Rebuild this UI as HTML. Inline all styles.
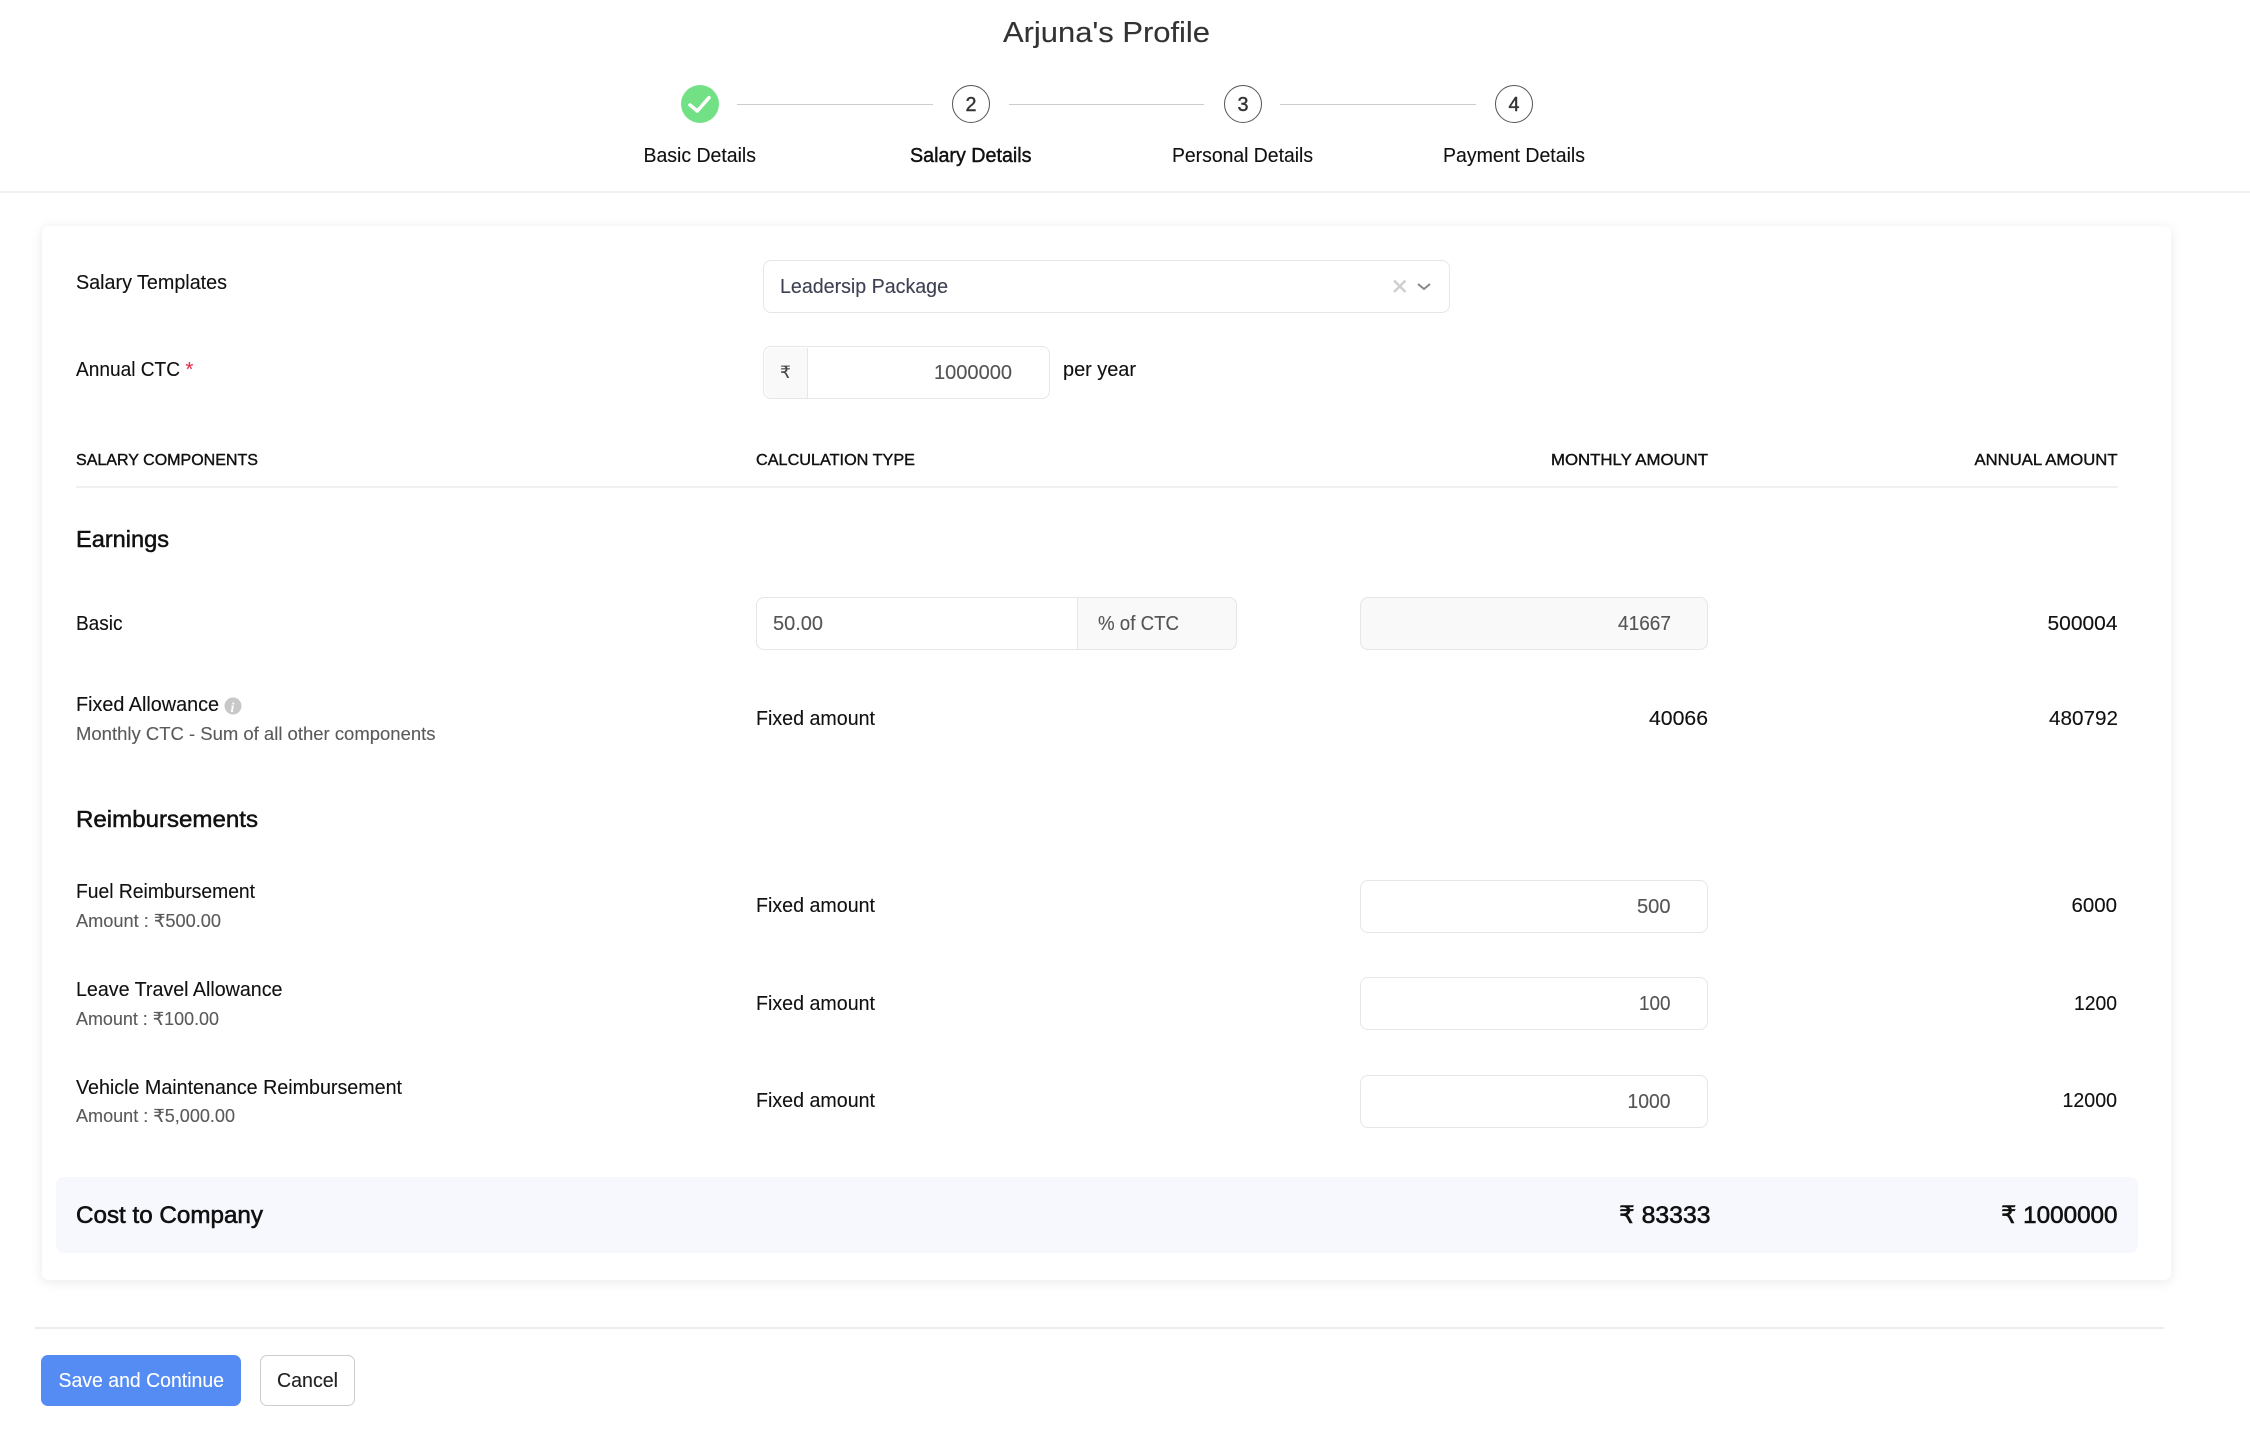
<!DOCTYPE html>
<html lang="en">
<head>
<meta charset="utf-8">
<title>Arjuna's Profile</title>
<style>
html,body{margin:0;padding:0;background:#fff;width:2250px;height:1448px;overflow:hidden;font-family:"Liberation Sans",sans-serif}
.b{position:absolute;box-sizing:border-box}
.field{border:1.5px solid #e6e6e6;border-radius:8px;background:#fff}
.grey{background:#f9f9f9}
svg.t{position:absolute;left:0;top:0}
svg text{font-family:"Liberation Sans","DejaVu Sans",sans-serif;font-size:20px;fill:#111;stroke:#111;stroke-width:.12px}
.m{stroke-width:.45px}
.s{font-size:18px;fill:#5a5a5a;stroke:#5a5a5a}
.v{fill:#555;stroke:#555}
.h{font-size:16px;stroke-width:.4px}
.e{font-size:23px;stroke-width:.5px}
.c{font-size:24px;stroke-width:.6px}
.d{font-size:20px;fill:#333;stroke:#333;stroke-width:.4px}
</style>
</head>
<body>
<div class="b" style="left:0;top:191px;width:2250px;height:1.5px;background:#f0f0f0"></div>
<div class="b" style="left:737px;top:103.500px;width:196px;height:1.5px;background:#ccc"></div>
<div class="b" style="left:1009px;top:103.500px;width:195px;height:1.5px;background:#ccc"></div>
<div class="b" style="left:1280px;top:103.500px;width:196px;height:1.5px;background:#ccc"></div>
<div class="b" style="left:681px;top:85px;width:38px;height:38px;border-radius:50%;background:#72e085"></div>
<div class="b" style="left:952px;top:85px;width:38px;height:38px;border-radius:50%;border:1.5px solid #555"></div>
<div class="b" style="left:1224px;top:85px;width:38px;height:38px;border-radius:50%;border:1.5px solid #555"></div>
<div class="b" style="left:1495px;top:85px;width:38px;height:38px;border-radius:50%;border:1.5px solid #555"></div>

<div class="b" style="left:42px;top:226px;width:2129px;height:1054px;background:#fff;border-radius:7px;box-shadow:0 2px 12px rgba(0,0,0,.09)"></div>
<div class="b field" style="left:763px;top:260px;width:687px;height:53px"></div>
<div class="b field" style="left:763px;top:346px;width:287px;height:53px"></div>
<div class="b grey" style="left:764.500px;top:347.500px;width:43px;height:50px;border-right:1.5px solid #e6e6e6;border-radius:7px 0 0 7px"></div>
<div class="b" style="left:76px;top:486px;width:2042px;height:1.5px;background:#f0f0f0"></div>

<div class="b field" style="left:756px;top:597px;width:481px;height:53px"></div>
<div class="b grey" style="left:1077px;top:597px;width:160px;height:53px;border:1.5px solid #e6e6e6;border-radius:0 8px 8px 0"></div>
<div class="b field grey" style="left:1360px;top:597px;width:348px;height:53px"></div>
<div class="b field" style="left:1360px;top:880px;width:348px;height:53px"></div>
<div class="b field" style="left:1360px;top:977px;width:348px;height:53px"></div>
<div class="b field" style="left:1360px;top:1075px;width:348px;height:53px"></div>

<div class="b" style="left:56px;top:1177px;width:2082px;height:76px;background:#f6f8fd;border-radius:8px"></div>
<div class="b" style="left:35px;top:1327px;width:2129px;height:1.5px;background:#ececec"></div>
<div class="b" style="left:41px;top:1355px;width:200px;height:51px;background:#558cf4;border-radius:7px"></div>
<div class="b" style="left:260px;top:1355px;width:95px;height:51px;background:#fff;border:1.5px solid #ccc;border-radius:7px"></div>

<svg class="t" width="2250" height="1448" viewBox="0 0 2250 1448" xmlns="http://www.w3.org/2000/svg">
<polyline points="690,105 697.3,111 709,97.7" fill="none" stroke="#fff" stroke-width="3.5" stroke-linecap="round" stroke-linejoin="round"/>
<path d="M1394 280.500L1405.500 292M1405.500 280.500L1394 292" stroke="#cfcfcf" stroke-width="2.4" fill="none"/>
<path d="M1418 284L1424 289L1430 284" stroke="#888" stroke-width="2" fill="none"/>
<circle cx="233" cy="706" r="8.5" fill="#c8c8c8"/>

<text x="1003" y="42" textLength="207" lengthAdjust="spacingAndGlyphs" style="font-size:29px;fill:#333;stroke:#333">Arjuna's Profile</text>
<text x="965.500" y="111" textLength="11" lengthAdjust="spacingAndGlyphs" class="d">2</text>
<text x="1237.500" y="111" textLength="11" lengthAdjust="spacingAndGlyphs" class="d">3</text>
<text x="1508.500" y="111" textLength="11" lengthAdjust="spacingAndGlyphs" class="d">4</text>
<text x="643.500" y="162" textLength="112.500" lengthAdjust="spacingAndGlyphs">Basic Details</text>
<text x="910" y="162" textLength="121.500" lengthAdjust="spacingAndGlyphs" class="m">Salary Details</text>
<text x="1172" y="162" textLength="141" lengthAdjust="spacingAndGlyphs">Personal Details</text>
<text x="1443" y="162" textLength="142" lengthAdjust="spacingAndGlyphs">Payment Details</text>

<text x="76" y="289" textLength="151" lengthAdjust="spacingAndGlyphs">Salary Templates</text>
<text x="780" y="293" textLength="168" lengthAdjust="spacingAndGlyphs" style="fill:#3d4152;stroke:#3d4152">Leadersip Package</text>
<text x="76" y="376" textLength="104" lengthAdjust="spacingAndGlyphs">Annual CTC</text>
<text x="185.500" y="376" style="fill:#e8334a;stroke:#e8334a">*</text>
<text x="780" y="378" style="font-size:17px;fill:#444;stroke:#444">₹</text>
<text x="934" y="379" textLength="78" lengthAdjust="spacingAndGlyphs" class="v">1000000</text>
<text x="1063" y="376" textLength="73" lengthAdjust="spacingAndGlyphs">per year</text>

<text x="76" y="465" textLength="182" lengthAdjust="spacingAndGlyphs" class="h">SALARY COMPONENTS</text>
<text x="756" y="465" textLength="159" lengthAdjust="spacingAndGlyphs" class="h">CALCULATION TYPE</text>
<text x="1551" y="465" textLength="157" lengthAdjust="spacingAndGlyphs" class="h">MONTHLY AMOUNT</text>
<text x="1974.500" y="465" textLength="143" lengthAdjust="spacingAndGlyphs" class="h">ANNUAL AMOUNT</text>

<text x="76" y="547" textLength="93" lengthAdjust="spacingAndGlyphs" class="e">Earnings</text>
<text x="76" y="630" textLength="46.500" lengthAdjust="spacingAndGlyphs">Basic</text>
<text x="773" y="630" textLength="50" lengthAdjust="spacingAndGlyphs" class="v">50.00</text>
<text x="1098" y="630" textLength="81" lengthAdjust="spacingAndGlyphs" class="v">% of CTC</text>
<text x="1618" y="630" textLength="53" lengthAdjust="spacingAndGlyphs" class="v">41667</text>
<text x="2047.500" y="630" textLength="70" lengthAdjust="spacingAndGlyphs">500004</text>

<text x="76" y="711" textLength="143" lengthAdjust="spacingAndGlyphs">Fixed Allowance</text>
<text x="230.500" y="712" style="font-size:14px;fill:#fff;stroke:none;font-style:italic;font-weight:bold;font-family:'Liberation Serif',serif">i</text>
<text x="76" y="740" textLength="359.500" lengthAdjust="spacingAndGlyphs" class="s">Monthly CTC - Sum of all other components</text>
<text x="756" y="725" textLength="119" lengthAdjust="spacingAndGlyphs">Fixed amount</text>
<text x="1649" y="725" textLength="59" lengthAdjust="spacingAndGlyphs">40066</text>
<text x="2049" y="725" textLength="69" lengthAdjust="spacingAndGlyphs">480792</text>

<text x="76" y="827" textLength="182" lengthAdjust="spacingAndGlyphs" class="e">Reimbursements</text>

<text x="76" y="898" textLength="179" lengthAdjust="spacingAndGlyphs">Fuel Reimbursement</text>
<text x="76" y="927" textLength="145" lengthAdjust="spacingAndGlyphs" class="s">Amount : ₹500.00</text>
<text x="756" y="912" textLength="119" lengthAdjust="spacingAndGlyphs">Fixed amount</text>
<text x="1637" y="913" textLength="33.500" lengthAdjust="spacingAndGlyphs" class="v">500</text>
<text x="2071.500" y="912" textLength="45.500" lengthAdjust="spacingAndGlyphs">6000</text>

<text x="76" y="996" textLength="206.500" lengthAdjust="spacingAndGlyphs">Leave Travel Allowance</text>
<text x="76" y="1025" textLength="143" lengthAdjust="spacingAndGlyphs" class="s">Amount : ₹100.00</text>
<text x="756" y="1010" textLength="119" lengthAdjust="spacingAndGlyphs">Fixed amount</text>
<text x="1639" y="1010" textLength="31.500" lengthAdjust="spacingAndGlyphs" class="v">100</text>
<text x="2074" y="1010" textLength="43" lengthAdjust="spacingAndGlyphs">1200</text>

<text x="76" y="1094" textLength="326" lengthAdjust="spacingAndGlyphs">Vehicle Maintenance Reimbursement</text>
<text x="76" y="1122" textLength="159" lengthAdjust="spacingAndGlyphs" class="s">Amount : ₹5,000.00</text>
<text x="756" y="1107" textLength="119" lengthAdjust="spacingAndGlyphs">Fixed amount</text>
<text x="1627.500" y="1108" textLength="43" lengthAdjust="spacingAndGlyphs" class="v">1000</text>
<text x="2062.500" y="1107" textLength="54.500" lengthAdjust="spacingAndGlyphs">12000</text>

<text x="76" y="1223" textLength="187" lengthAdjust="spacingAndGlyphs" class="c">Cost to Company</text>
<text x="1619" y="1223" textLength="91.500" lengthAdjust="spacingAndGlyphs" class="c">₹ 83333</text>
<text x="2001" y="1223" textLength="116.500" lengthAdjust="spacingAndGlyphs" class="c">₹ 1000000</text>

<text x="58.500" y="1387" textLength="165.500" lengthAdjust="spacingAndGlyphs" style="fill:#fff;stroke:#fff">Save and Continue</text>
<text x="277" y="1387" textLength="61" lengthAdjust="spacingAndGlyphs" style="fill:#222;stroke:#222">Cancel</text>
</svg>
</body>
</html>
